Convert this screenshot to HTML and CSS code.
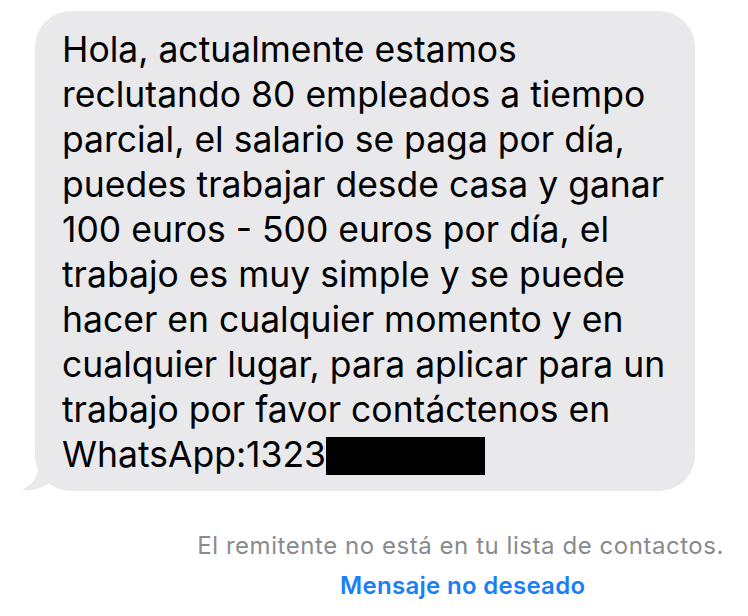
FILE: index.html
```html
<!DOCTYPE html>
<html lang="es">
<head>
<meta charset="utf-8">
<link rel="stylesheet" href="styles.css">
</head>
<body>
<div class="page">
  <div class="bubble">
    <svg class="tail" width="30" height="24" viewBox="0 0 30 24"><path d="M16 0 C16 10 10 18 0 23 C10 24 20 22 28 15 Z" fill="#e9e9eb"/></svg>
    <p class="msg">Hola, actualmente estamos<br>reclutando 80 empleados a tiempo<br>parcial, el salario se paga por día,<br>puedes trabajar desde casa y ganar<br>100 euros - 500 euros por día, el<br>trabajo es muy simple y se puede<br>hacer en cualquier momento y en<br>cualquier lugar, para aplicar para un<br>trabajo por favor contáctenos en<br>WhatsApp:1323<span class="redact"></span></p>
  </div>
  <p class="notice">El remitente no está en tu lista de contactos.</p>
  <p class="junk">Mensaje no deseado</p>
</div>
</body>
</html>
```
FILE: styles.css
```css
html, body { margin: 0; padding: 0; background: #fff; }
body { width: 748px; height: 616px; overflow: hidden; font-family: "Inter", "Liberation Sans", sans-serif; }
.page { padding: 11px 0 0 35px; }
.bubble {
  position: relative;
  width: 660px;
  height: 480px;
  box-sizing: border-box;
  background: #e9e9eb;
  border-radius: 36px;
  padding: 16px 0 0 27px;
}
.tail { position: absolute; left: -13px; bottom: 0; }
.msg {
  margin: 0;
  font-size: 35.5px;
  line-height: 45px;
  color: #000;
  letter-spacing: 0;
}
.redact { display: inline-block; width: 159px; height: 38px; background: #000; vertical-align: -8px; }
.notice {
  margin: 40px 0 0 0;
  width: 689px;
  text-align: right;
  font-size: 24px;
  line-height: 30px;
  letter-spacing: 0.55px;
  color: #8a8a8e;
}
.junk {
  margin: 10px 0 0 0;
  padding-left: 305px;
  font-size: 24px;
  line-height: 30px;
  letter-spacing: 0.3px;
  font-weight: 600;
  color: #1a7ef5;
}
```
